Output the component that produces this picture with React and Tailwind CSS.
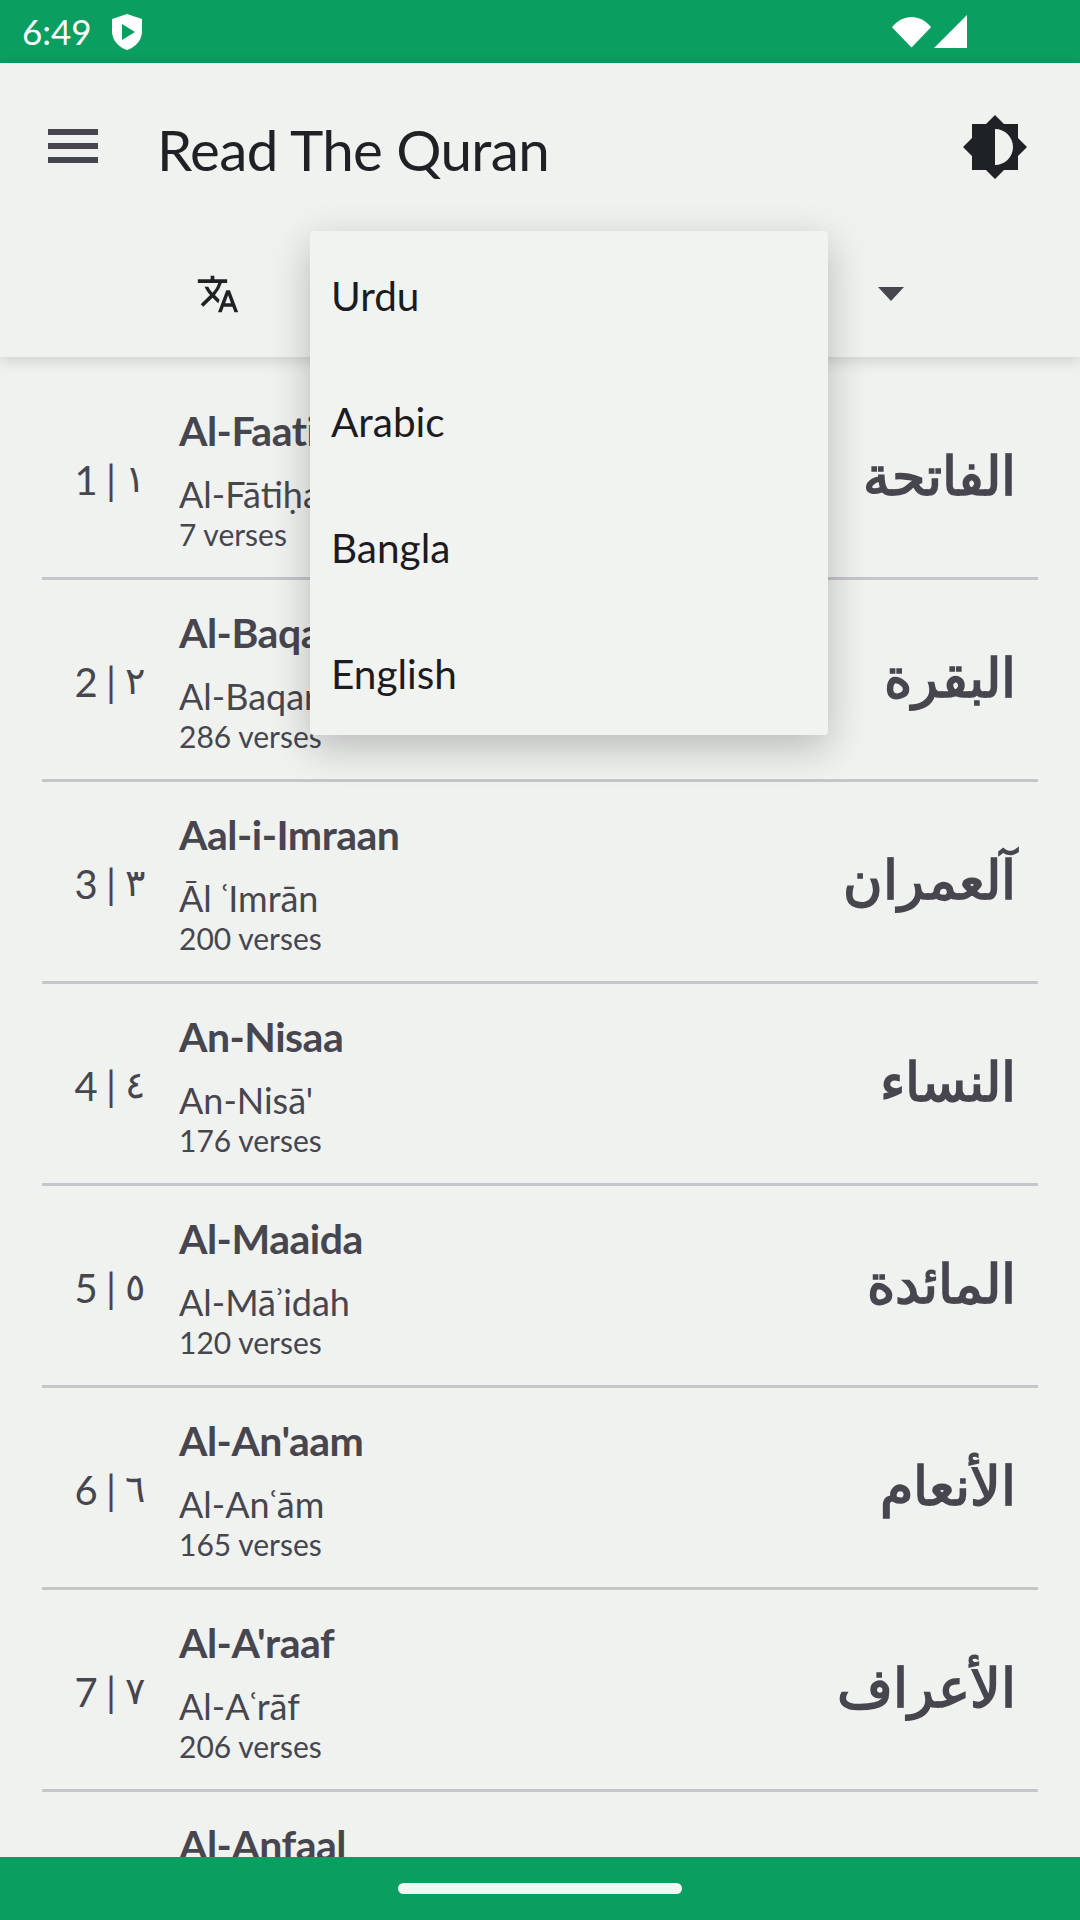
const suras = [
  { n: "1", ar: "١", en: "Al-Faatiha", tr: "Al-Fātiḥah", v: "7 verses", name: "الفاتحة" },
  { n: "2", ar: "٢", en: "Al-Baqara", tr: "Al-Baqarah", v: "286 verses", name: "البقرة" },
  { n: "3", ar: "٣", en: "Aal-i-Imraan", tr: "Āl ʿImrān", v: "200 verses", name: "آلعمران" },
  { n: "4", ar: "٤", en: "An-Nisaa", tr: "An-Nisā'", v: "176 verses", name: "النساء" },
  { n: "5", ar: "٥", en: "Al-Maaida", tr: "Al-Māʾidah", v: "120 verses", name: "المائدة" },
  { n: "6", ar: "٦", en: "Al-An'aam", tr: "Al-Anʿām", v: "165 verses", name: "الأنعام" },
  { n: "7", ar: "٧", en: "Al-A'raaf", tr: "Al-Aʿrāf", v: "206 verses", name: "الأعراف" },
  { n: "8", ar: "٨", en: "Al-Anfaal", tr: "Al-Anfāl", v: "75 verses", name: "الانفال" },
];

const languages = ["Urdu", "Arabic", "Bangla", "English"];

function SuraRow({ sura }) {
  return (
    <div className="mx-[42px] flex h-[202px] shrink-0 items-center border-b-[3px] border-[#c6c5cc] text-[#47464f]">
      <div className="flex w-[137px] shrink-0 items-start justify-end gap-[9px] pt-[4px] pr-[34px] text-[40px] leading-[48px]">
        <span className="whitespace-nowrap [word-spacing:-2px]">{sura.n} |</span>
        <span className="pt-[1px] text-[38px] leading-[40px] font-light">{sura.ar}</span>
      </div>
      <div className="flex min-w-0 flex-col pt-[2px]">
        <span className="text-[41px] leading-[50px] font-bold tracking-[-0.5px]">{sura.en}</span>
        <span className="mt-[17px] text-[36px] leading-[42px]">{sura.tr}</span>
        <span className="mt-[1px] text-[30px] leading-[36px]">{sura.v}</span>
      </div>
      <span dir="rtl" className="mr-[22px] ml-auto pb-[6px] text-[54px] leading-[70px] font-bold">
        {sura.name}
      </span>
    </div>
  );
}

export default function App() {
  return (
    <div className="relative flex h-[1920px] w-[1080px] flex-col overflow-hidden bg-[#f0f2f0] font-['Lato','Noto_Sans',sans-serif] text-[#1c1b1f]">
      <div className="flex h-[63px] shrink-0 items-center bg-[#0a9e60] pr-[113px] pl-[22px] text-white">
        <span className="text-[35px] leading-none">6:49</span>
        <svg viewBox="0 0 30 36" className="ml-[20px] h-[36px] w-[30px]">
          <path d="M15 0 L30 5 V17 C30 26 24 33 15 36 C6 33 0 26 0 17 V5 Z" fill="#fff" />
          <path d="M10 10 L23 18 L10 26 Z" fill="#0a9e60" />
        </svg>
        <svg viewBox="0 0 40 32" className="ml-auto h-[32px] w-[39px]">
          <path d="M0 11 C11 -3 29 -3 40 11 L20 32 Z" fill="#fff" />
        </svg>
        <svg viewBox="0 0 33 33" className="ml-[3px] h-[33px] w-[33px]">
          <path d="M33 0 V33 H0 Z" fill="#fff" />
        </svg>
      </div>

      <header className="relative z-10 h-[294px] shrink-0 bg-[#f0f2f0] shadow-[0_4px_14px_rgba(0,0,0,0.14)]">
        <div className="flex h-[168px] items-center pr-[53px] pl-[48px]">
          <div className="mb-[2px] flex flex-col gap-[8px]">
            <div className="h-[6px] w-[50px] bg-[#47464f]" />
            <div className="h-[6px] w-[50px] bg-[#47464f]" />
            <div className="h-[6px] w-[50px] bg-[#47464f]" />
          </div>
          <h1 className="mt-[4px] ml-[59px] text-[56.5px] leading-none font-normal tracking-[-0.6px] text-[#1f2224]">Read The Quran</h1>
          <svg viewBox="0 0 64 64" className="ml-auto h-[64px] w-[64px]">
            <path fillRule="evenodd" fill="#1f2224" d="M32 0 L41 9 H55 V23 L64 32 L55 41 V55 H41 L32 64 L23 55 H9 V41 L0 32 L9 23 V9 H23 Z M32 14 V50 C42 50 50 42 50 32 C50 22 42 14 32 14 Z" />
          </svg>
        </div>
        <div className="flex h-[126px] items-center pr-[176px] pl-[196px]">
          <svg viewBox="0 0 24 24" className="h-[44px] w-[44px] text-[#1f2224]">
            <path fill="currentColor" d="m12.87 15.07-2.54-2.51.03-.03A17.52 17.52 0 0 0 14.07 6H17V4h-7V2H8v2H1v1.99h11.17C11.5 7.92 10.44 9.75 9 11.35 8.07 10.32 7.3 9.19 6.69 8h-2c.73 1.63 1.73 3.17 2.98 4.56l-5.09 5.02L4 19l5-5 3.11 3.11.76-2.04zM18.5 10h-2L12 22h2l1.12-3h4.75L21 22h2l-4.5-12zm-2.62 7 1.62-4.33L19.12 17h-3.24z" />
          </svg>
          <svg viewBox="0 0 26 14" className="ml-auto h-[14px] w-[26px]">
            <path d="M0 0 H26 L13 14 Z" fill="#47464f" />
          </svg>
        </div>
      </header>

      <div className="flex min-h-0 flex-1 flex-col overflow-hidden pt-[21px]">
        {suras.map((sura) => (
          <SuraRow key={sura.n} sura={sura} />
        ))}
      </div>

      <div className="relative z-10 flex h-[63px] shrink-0 items-center justify-center bg-[#0a9e60]">
        <div className="h-[11px] w-[284px] rounded-full bg-[#eef7f3]" />
      </div>

      <div className="absolute top-[231px] left-[310px] z-20 flex w-[518px] flex-col rounded-[4px] bg-[#f1f3f1] shadow-[0_12px_40px_rgba(0,0,0,0.24)]">
        {languages.map((item) => (
          <button key={item} className="flex h-[126px] items-center px-[21px] pt-[4px] text-left text-[40.5px] text-[#1c1b1f]">
            {item}
          </button>
        ))}
      </div>
    </div>
  );
}
